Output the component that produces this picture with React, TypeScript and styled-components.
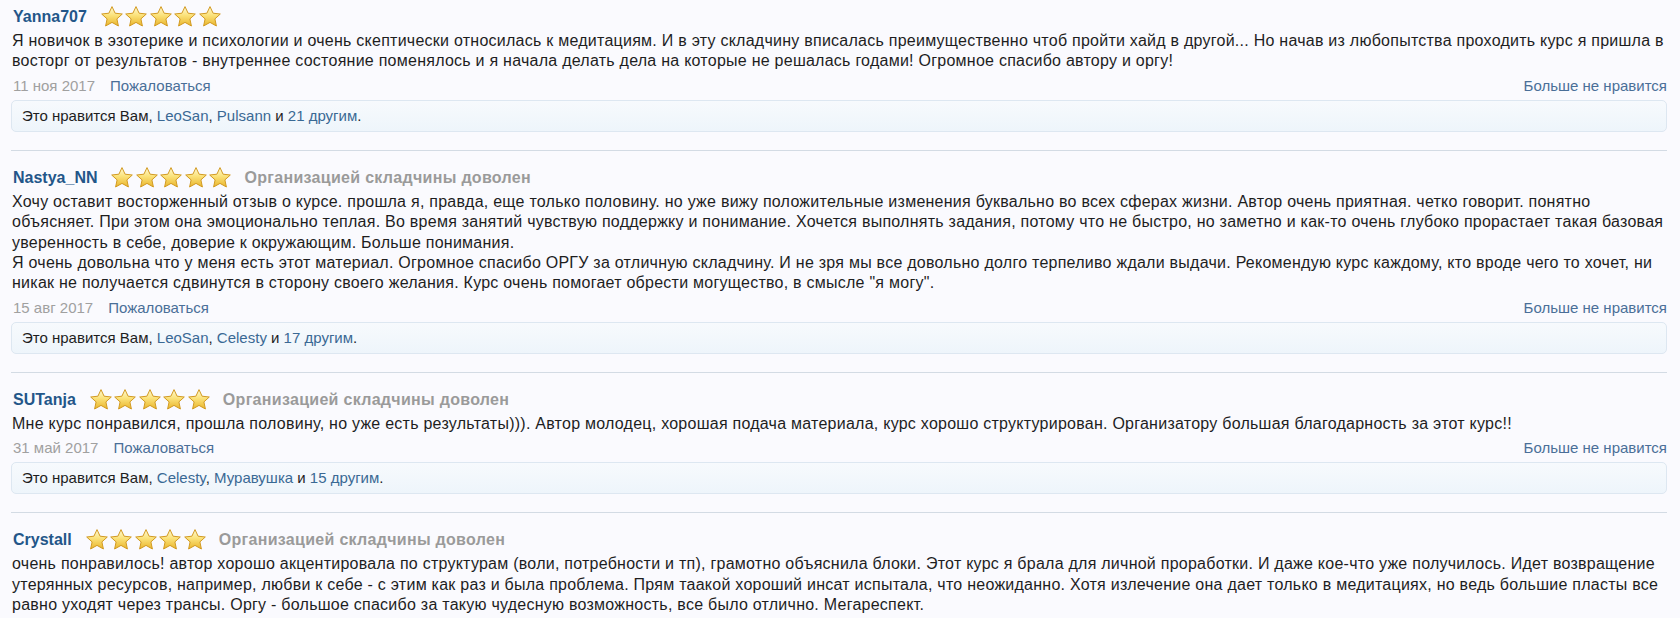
import { useId } from "react";
import styled, { createGlobalStyle } from "styled-components";

const GlobalStyle = createGlobalStyle`
  html, body {
    margin: 0;
    padding: 0;
    background: #fafafe;
    overflow: hidden;
  }
  body {
    font-family: "Liberation Sans", Arial, sans-serif;
    color: #222;
  }
`;

const Page = styled.div`
  padding: 5px 13px 0 11px;
`;

const Review = styled.div<{ $first?: boolean }>`
  padding-top: ${(p) => (p.$first ? "0" : "15px")};
  padding-bottom: 18px;
  border-bottom: 1px solid #d3dbe4;
`;

const Head = styled.div`
  display: flex;
  align-items: center;
  height: 24px;
  padding-left: 2px;
`;

const UserName = styled.a`
  font-size: 16px;
  font-weight: bold;
  color: #235689;
  text-decoration: none;
`;

const Stars = styled.span`
  display: inline-flex;
  gap: 0.5px;
  margin-left: 13px;
`;

const Verdict = styled.span`
  margin-left: 12px;
  font-size: 16px;
  letter-spacing: 0.3px;
  font-weight: bold;
  color: #9a9a9a;
`;

const Body = styled.div`
  margin-top: 2px;
  padding-left: 1px;
  font-size: 16px;
  letter-spacing: 0.25px;
  line-height: 20.4px;
  color: #1e1e1e;
`;

const Meta = styled.div`
  display: flex;
  justify-content: space-between;
  margin-top: 5px;
  height: 18px;
  line-height: 18px;
  font-size: 15px;
  padding-left: 2px;
`;

const MetaLeft = styled.div`
  display: flex;
  gap: 15px;
`;

const Date = styled.span`
  color: #a0a0a0;
`;

const MetaLink = styled.a`
  color: #4a6f98;
  text-decoration: none;
`;

const Likes = styled.div`
  margin-top: 5px;
  height: 30px;
  line-height: 30px;
  padding-left: 10px;
  border: 1px solid #dde7f1;
  border-radius: 5px;
  background: linear-gradient(to bottom, #f7fafd, #eef5fb);
  font-size: 15px;
  color: #1e1e1e;
`;

const LikeName = styled.a`
  color: #3a6994;
  text-decoration: none;
`;

// golden rating star with a soft top highlight
const Star = () => {
  const id = useId();
  return (
    <svg width="24" height="24" viewBox="0 0 24 24">
      <defs>
        <linearGradient id={id} x1="0" y1="0" x2="0" y2="1">
          <stop offset="0" stopColor="#fffbd8" />
          <stop offset="0.45" stopColor="#fbe27a" />
          <stop offset="1" stopColor="#e9b52c" />
        </linearGradient>
      </defs>
      <path
        d="M12 1.6l3.1 6.6 7.2.8-5.4 4.9 1.5 7.1L12 17.4 5.6 21l1.5-7.1L1.7 9l7.2-.8z"
        fill={`url(#${id})`}
        stroke="#d29a22"
        strokeWidth="1"
        strokeLinejoin="round"
      />
    </svg>
  );
};

type Entry = {
  user: string;
  verdict?: boolean;
  text: string[];
  date: string;
  likers: [string, string];
  others: number;
};

const entries: Entry[] = [
  {
    user: "Yanna707",
    text: [
      "Я новичок в эзотерике и психологии и очень скептически относилась к медитациям. И в эту складчину вписалась преимущественно чтоб пройти хайд в другой... Но начав из любопытства проходить курс я пришла в восторг от результатов - внутреннее состояние поменялось и я начала делать дела на которые не решалась годами! Огромное спасибо автору и оргу!",
    ],
    date: "11 ноя 2017",
    likers: ["LeoSan", "Pulsann"],
    others: 21,
  },
  {
    user: "Nastya_NN",
    verdict: true,
    text: [
      "Хочу оставит восторженный отзыв о курсе. прошла я, правда, еще только половину. но уже вижу положительные изменения буквально во всех сферах жизни. Автор очень приятная. четко говорит. понятно объясняет. При этом она эмоционально теплая. Во время занятий чувствую поддержку и понимание. Хочется выполнять задания, потому что не быстро, но заметно и как-то очень глубоко прорастает такая базовая уверенность в себе, доверие к окружающим. Больше понимания.",
      "Я очень довольна что у меня есть этот материал. Огромное спасибо ОРГУ за отличную складчину. И не зря мы все довольно долго терпеливо ждали выдачи. Рекомендую курс каждому, кто вроде чего то хочет, ни никак не получается сдвинутся в сторону своего желания. Курс очень помогает обрести могущество, в смысле \"я могу\".",
    ],
    date: "15 авг 2017",
    likers: ["LeoSan", "Celesty"],
    others: 17,
  },
  {
    user: "SUTanja",
    verdict: true,
    text: [
      "Мне курс понравился, прошла половину, но уже есть результаты))). Автор молодец, хорошая подача материала, курс хорошо структурирован. Организатору большая благодарность за этот курс!!",
    ],
    date: "31 май 2017",
    likers: ["Celesty", "Муравушка"],
    others: 15,
  },
  {
    user: "Crystall",
    verdict: true,
    text: [
      "очень понравилось! автор хорошо акцентировала по структурам (воли, потребности и тп), грамотно объяснила блоки. Этот курс я брала для личной проработки. И даже кое-что уже получилось. Идет возвращение утерянных ресурсов, например, любви к себе - с этим как раз и была проблема. Прям таакой хороший инсат испытала, что неожиданно. Хотя излечение она дает только в медитациях, но ведь большие пласты все равно уходят через трансы. Оргу - большое спасибо за такую чудесную возможность, все было отлично. Мегареспект.",
    ],
    date: "",
    likers: ["", ""],
    others: 0,
  },
];

const ReviewItem = ({ entry, first }: { entry: Entry; first: boolean }) => (
  <Review $first={first}>
    <Head>
      <UserName>{entry.user}</UserName>
      <Stars>
        {[0, 1, 2, 3, 4].map((i) => (
          <Star key={i} />
        ))}
      </Stars>
      {entry.verdict && <Verdict>Организацией складчины доволен</Verdict>}
    </Head>
    <Body>
      {entry.text.map((t, i) => (
        <div key={i}>{t}</div>
      ))}
    </Body>
    {entry.date && (
      <>
        <Meta>
          <MetaLeft>
            <Date>{entry.date}</Date>
            <MetaLink>Пожаловаться</MetaLink>
          </MetaLeft>
          <MetaLink>Больше не нравится</MetaLink>
        </Meta>
        <Likes>
          Это нравится Вам, <LikeName>{entry.likers[0]}</LikeName>,{" "}
          <LikeName>{entry.likers[1]}</LikeName> и{" "}
          <LikeName>{entry.others} другим</LikeName>.
        </Likes>
      </>
    )}
  </Review>
);

const App = () => (
  <Page>
    <GlobalStyle />
    {entries.map((e, i) => (
      <ReviewItem key={e.user} entry={e} first={i === 0} />
    ))}
  </Page>
);

export default App;
